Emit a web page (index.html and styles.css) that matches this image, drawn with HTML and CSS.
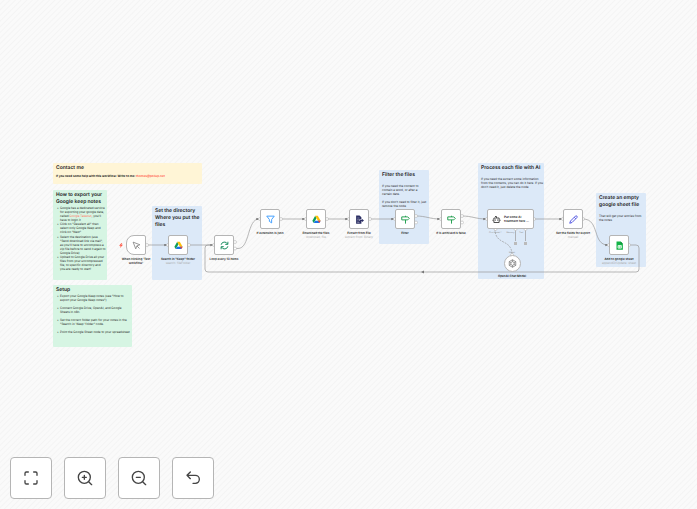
FILE: index.html
```html
<!DOCTYPE html>
<html lang="en">
<head>
    <meta charset="UTF-8">
    <meta name="viewport" content="width=device-width, initial-scale=1.0">
    <title>Google Keep notes workflow</title>
    <link rel="stylesheet" href="styles.css">
</head>
<body>
    <main class="canvas">
        <section class="note yellow note-contact">
            <h2>Contact me</h2>
            <p><strong>If you need some help with this workflow: Write to me: <a href="#">thomas@pollup.net</a></strong></p>
        </section>
        <section class="note green note-export">
            <h2>How to export your<br>Google keep notes</h2>
            <ul>
                <li>Google has a dedicated service<br>for exporting your google data,<br>called <a href="#">Google Takeout</a>, you'll<br>have to login it</li>
                <li>Click on "Deselect all" then<br>select only Google Keep and<br>click on "Next"</li>
                <li class="spaced">Select the destination (use<br>"Send download link via mail",<br>as you'll have to uncompress a<br>zip file before to send it again to<br>Google Drive)</li>
                <li>Upload to Google Drive all your<br>files from your uncompressed<br>file, to specific directory and<br>you are ready to start!</li>
            </ul>
        </section>
        <section class="note blue note-directory">
            <h2>Set the directory<br>Where you put the<br>files</h2>
        </section>
        <section class="note green note-setup">
            <h2>Setup</h2>
            <ul class="steps">
                <li>Export your Google Keep notes (see "How to<br>export your Google Keep notes")</li>
                <li>Connect Google Drive, OpenAI, and Google<br>Sheets in n8n.</li>
                <li>Set the correct folder path for your notes in the<br>"Search in 'Keep' folder" node.</li>
                <li>Point the Google Sheet node to your spreadsheet</li>
            </ul>
        </section>
        <section class="note blue note-filter">
            <h2>Filter the files</h2>
            <p>If you need the content to<br>contain a word, or after a<br>certain date.</p>
            <p>If you don't need to filter it, just<br>remove the node</p>
        </section>
        <section class="note blue note-process">
            <h2>Process each file with AI</h2>
            <p>If you need the extract some information<br>from the contents, you can do it here. If you<br>don't need it, just delete the node</p>
        </section>
        <section class="note blue note-create">
            <h2>Create an empty<br>google sheet file</h2>
            <p>That will get your entries from<br>the notes</p>
        </section>

        <svg class="edges" width="697" height="509" viewBox="0 0 697 509" aria-hidden="true">
            <defs>
                <marker id="arrow" viewBox="0 0 4 4" refX="4" refY="2" markerWidth="3" markerHeight="3" markerUnits="userSpaceOnUse" orient="auto">
                    <path d="M0.5 0.3L3.8 2L0.5 3.7z" fill="#666"/>
                </marker>
            </defs>
            <g class="line arrows">
                <path d="M146 245H167"/>
                <path d="M188 245H213"/>
                <path d="M235 248.500H238C250 248.500 247 219 259 219"/>
                <path d="M280 219H305"/>
                <path d="M327 219H348"/>
                <path d="M370 219H394"/>
                <path d="M416 216C426 216 430 219 440 219"/>
                <path d="M462 216C472 216 476 219 486 219"/>
                <path d="M534 219H562"/>
                <path d="M583 219C600 219 592 245 608 245"/>
            </g>
            <g class="line">
                <path d="M629 245H636Q639 245 639 248V269Q639 272 636 272H208Q205 272 205 269V248Q205 245 208 245H214"/>
                <path class="dashed" d="M495 229C495 246 512 238 512 255"/>
                <path d="M515.500 230V241M525.500 230V241"/>
            </g>
            <path d="M421 272L424 270.500V273.500z" fill="#777"/>
            <path d="M514 242h3v3h-3zM524 242h3v3h-3z" fill="#bbb"/>
            <path d="M121.500 243l-2.500 2.700h1.700l-.7 2.300 3-3.200h-1.800l1-1.800z" fill="#ff5a48"/>
            <g class="ports">
                <circle cx="147" cy="245" r="1.500"/><circle cx="168" cy="245" r="1.500"/><circle cx="189" cy="245" r="1.500"/>
                <circle cx="214" cy="245" r="1.500"/><circle cx="235" cy="242" r="1.500"/><circle cx="235" cy="248.500" r="1.500"/>
                <circle cx="260" cy="219" r="1.500"/><circle cx="281" cy="219" r="1.500"/><circle cx="306" cy="219" r="1.500"/>
                <circle cx="327" cy="219" r="1.500"/><circle cx="349" cy="219" r="1.500"/><circle cx="370" cy="219" r="1.500"/>
                <circle cx="395" cy="219" r="1.500"/><circle cx="416" cy="216" r="1.500"/><circle cx="416" cy="222.500" r="1.500"/>
                <circle cx="441" cy="219" r="1.500"/><circle cx="462" cy="216" r="1.500"/><circle cx="462" cy="222.500" r="1.500"/>
                <circle cx="487" cy="219" r="1.500"/><circle cx="534" cy="219" r="1.500"/><circle cx="563" cy="219" r="1.500"/>
                <circle cx="583" cy="219" r="1.500"/><circle cx="609" cy="245" r="1.500"/><circle cx="629" cy="245" r="1.500"/>
                <circle cx="495.500" cy="229" r="1.500"/><circle cx="515.500" cy="229" r="1.500"/><circle cx="525.500" cy="229" r="1.500"/>
                <circle cx="512" cy="255" r="1.500"/>
            </g>
        </svg>

        <div class="node node-trigger">
            <div class="box trigger">
                <svg viewBox="0 0 24 24" fill="none" stroke="#777" stroke-width="2" stroke-linejoin="round"><path d="M3 3l7 18 3-8 8-3zM13 13l7 7"/></svg>
            </div>
            <span>When clicking 'Test<br>workflow'</span>
        </div>
        <div class="node node-search">
            <div class="box">
                <svg viewBox="0 0 24 24"><path fill="#0f9d58" d="M8.500 2L1 15.500l3.700 6L12 8.500z"/><path fill="#ffc107" d="M8.500 2h7L23 15.500h-7.500z"/><path fill="#1a73e8" d="M8.500 15.500H23l-3.700 6H4.700z"/><path fill="#ea4335" d="M15.500 15.500H23l-3.700 6z"/></svg>
            </div>
            <span>Search in "Keep" folder</span>
            <small>search: fileFolder</small>
        </div>
        <div class="node node-loop">
            <div class="box">
                <svg viewBox="0 0 24 24" fill="none" stroke="#138a5b" stroke-width="2.500"><path d="M3 10a9 9 0 0 1 17-2M21 2v7h-7M21 14a9 9 0 0 1-17 2M3 22v-7h7"/></svg>
            </div>
            <span>Loop every 10 items</span>
        </div>
        <div class="node node-extension">
            <div class="box">
                <svg viewBox="0 0 24 24" fill="none" stroke="#3b9cff" stroke-width="2.500" stroke-linejoin="round"><path d="M2 3h20l-7 9v9l-6-4v-5z"/></svg>
            </div>
            <span>If extension is json</span>
        </div>
        <div class="node node-download">
            <div class="box">
                <svg viewBox="0 0 24 24"><path fill="#0f9d58" d="M8.500 2L1 15.500l3.700 6L12 8.500z"/><path fill="#ffc107" d="M8.500 2h7L23 15.500h-7.500z"/><path fill="#1a73e8" d="M8.500 15.500H23l-3.700 6H4.700z"/><path fill="#ea4335" d="M15.500 15.500H23l-3.700 6z"/></svg>
            </div>
            <span>Download the files</span>
            <small>download: file</small>
        </div>
        <div class="node node-extract">
            <div class="box">
                <svg viewBox="0 0 24 24"><path fill="#2c2f64" d="M3 1h9l5 5v6h-6v4h6v7H3z"/><path fill="#2c2f64" d="M12 13h6v-3l6 4.500-6 4.500v-3h-6z"/><path stroke="#fff" stroke-width="1" d="M6 8h6M6 12h4M6 16h4M6 20h6"/></svg>
            </div>
            <span>Extract from File</span>
            <small>extract from: Binary</small>
        </div>
        <div class="node node-filter">
            <div class="box">
                <svg viewBox="0 0 24 24" fill="none" stroke="#1d9c4b" stroke-width="2.500" stroke-linejoin="round"><path d="M2 5h16l4 4-4 4H2zM12 13v10M12 2v3"/></svg>
            </div>
            <span>Filter</span>
        </div>
        <div class="node node-archived">
            <div class="box">
                <svg viewBox="0 0 24 24" fill="none" stroke="#1d9c4b" stroke-width="2.500" stroke-linejoin="round"><path d="M2 5h16l4 4-4 4H2zM12 13v10M12 2v3"/></svg>
            </div>
            <span>If is archived is false</span>
        </div>
        <div class="node node-ai">
            <div class="box wide">
                <svg viewBox="0 0 24 24" fill="none" stroke="#444" stroke-width="2.500" stroke-linejoin="round"><path d="M5 8h14v12H5zM12 8V4H8M1 14h3M20 14h3M9 12v3M15 12v3"/></svg>
                <span>Put some AI<br>treatment here ...</span>
            </div>
            <div class="inputs"><small>Chat Model *</small><small>Memory</small><small>Tool</small></div>
        </div>
        <div class="node node-openai">
            <small>Model</small>
            <div class="box round">
                <svg viewBox="0 0 24 24" fill="none" stroke="#777" stroke-width="2"><path d="M12 2l8.700 5v10L12 22l-8.700-5V7zM12 7l4.500 2.500v5L12 17l-4.500-2.500v-5zM12 2v5M20.700 7l-4.200 2.500M20.700 17l-4.200-2.500M12 22v-5M3.300 17l4.200-2.500M3.300 7l4.200 2.500"/></svg>
            </div>
            <span>OpenAI Chat Model</span>
        </div>
        <div class="node node-fields">
            <div class="box">
                <svg viewBox="0 0 24 24" fill="none" stroke="#4b4fe0" stroke-width="2.500" stroke-linejoin="round"><path d="M2 22l2-6L17 3q2-2 4 0t0 4L8 20zM14 6l4 4"/></svg>
            </div>
            <span>Set the fields for export</span>
            <small>manual</small>
        </div>
        <div class="node node-sheet">
            <div class="box">
                <svg viewBox="0 0 24 24"><path fill="#12b347" d="M4 1h11l6 6v16H4z"/><path fill="#0c8a35" d="M15 1l6 6h-6z"/><path fill="none" stroke="#fff" stroke-width="2" d="M8 12h9v7H8zM8 15.500h9M12.500 12v7"/></svg>
            </div>
            <span>Add to google sheet</span>
            <small>appendOrUpdate: sheet</small>
        </div>

        <nav class="controls">
            <button type="button" aria-label="Fit to view">
                <svg viewBox="0 0 24 24"><path d="M3 8V5a2 2 0 0 1 2-2h3M16 3h3a2 2 0 0 1 2 2v3M21 16v3a2 2 0 0 1-2 2h-3M8 21H5a2 2 0 0 1-2-2v-3"/></svg>
            </button>
            <button type="button" aria-label="Zoom in">
                <svg viewBox="0 0 24 24"><circle cx="11" cy="11" r="9"/><path d="M22 22l-4.500-4.500M11 8v6M8 11h6"/></svg>
            </button>
            <button type="button" aria-label="Zoom out">
                <svg viewBox="0 0 24 24"><circle cx="11" cy="11" r="9"/><path d="M22 22l-4.500-4.500M8 11h6"/></svg>
            </button>
            <button type="button" aria-label="Reset zoom">
                <svg viewBox="0 0 24 24"><path d="M8 13L3 8l5-5M3 8h12.500a5.500 5.500 0 0 1 0 12H12"/></svg>
            </button>
        </nav>
    </main>
</body>
</html>
```

FILE: styles.css
```css
* {
    box-sizing: border-box;
}
body {
    margin: 0;
    font-family: Inter, "Liberation Sans", sans-serif;
    font-size: 3px;
    line-height: 4px;
    color: #222;
    text-rendering: geometricPrecision;
}
.canvas {
    position: relative;
    min-height: 100vh;
    overflow: hidden;
    background: repeating-linear-gradient(135deg, #fafafa 0, #fafafa 2px, #f4f4f4 3px, #fafafa 4px);
}
h2, p, ul {
    margin: 0;
}
h2 {
    font-size: 5px;
    line-height: 7px;
    font-weight: 600;
    margin-bottom: 2px;
}
a {
    color: #ff6d5a;
    text-decoration: none;
}

/* sticky notes */
.note {
    position: absolute;
    padding: 2px 3px;
    border-radius: 1px;
    white-space: nowrap;
}
.note p + p {
    margin-top: 4px;
}
.note ul {
    padding-left: 4px;
    list-style: none;
}
.note li {
    position: relative;
}
.note li::before {
    content: "•";
    position: absolute;
    left: -3px;
}
.note li.spaced {
    margin-top: 1px;
}
.note .steps li {
    margin-bottom: 4px;
}
.yellow {
    background: #fff5d6;
}
.green {
    background: #d6f5e3;
}
.blue {
    background: #dce9f8;
}
.note-contact { left: 53px; top: 163px; width: 149px; height: 21px; }
.note-export { left: 53px; top: 190px; width: 54px; height: 90px; }
.note-directory { left: 152px; top: 206px; width: 50px; height: 74px; }
.note-setup { left: 53px; top: 285px; width: 79px; height: 62px; }
.note-filter { left: 379px; top: 170px; width: 50px; height: 74px; }
.note-process { left: 478px; top: 163px; width: 66px; height: 116px; }
.note-create { left: 596px; top: 193px; width: 50px; height: 74px; }
.note-export h2, .note-setup h2 {
    margin-bottom: 0;
}
.note-filter h2, .note-process h2, .note-create h2 {
    margin-bottom: 5px;
}

/* connections */
.edges {
    position: absolute;
    left: 0;
    top: 0;
}
.line {
    fill: none;
    stroke: #999;
    stroke-width: 0.7;
}
.arrows path {
    marker-end: url(#arrow);
}
.dashed {
    stroke-dasharray: 2 1;
}
.ports {
    fill: #fff;
    stroke: #aaa;
    stroke-width: 0.5;
}

/* nodes */
.node {
    position: absolute;
    width: 20px;
    display: flex;
    flex-direction: column;
    align-items: center;
    text-align: center;
    white-space: nowrap;
    font-weight: 600;
}
.box {
    width: 20px;
    height: 20px;
    margin-bottom: 2px;
    display: flex;
    align-items: center;
    justify-content: center;
    background: #fff;
    border: 1px solid #b5b5b5;
    border-radius: 2px;
}
.box svg {
    width: 9px;
    height: 9px;
}
.trigger {
    border-radius: 8px 2px 2px 8px;
}
.wide {
    width: 47px;
    gap: 3px;
    text-align: left;
}
.round {
    width: 17px;
    height: 17px;
    border-radius: 50%;
}
small {
    font-size: 2px;
    font-weight: 400;
    color: #888;
}
.node > span + small {
    font-size: 3px;
    color: #aaa;
}
.inputs {
    display: flex;
    width: 47px;
    gap: 5px;
    padding-left: 2px;
}
.node-trigger { left: 126px; top: 235px; }
.node-search { left: 168px; top: 235px; }
.node-loop { left: 214px; top: 235px; }
.node-extension { left: 260px; top: 209px; }
.node-download { left: 306px; top: 209px; }
.node-extract { left: 349px; top: 209px; }
.node-filter { left: 395px; top: 209px; }
.node-archived { left: 441px; top: 209px; }
.node-ai { left: 487px; top: 209px; width: 47px; }
.node-openai { left: 502px; top: 251px; }
.node-fields { left: 563px; top: 209px; }
.node-sheet { left: 609px; top: 235px; }

/* canvas buttons */
.controls {
    position: absolute;
    left: 10px;
    bottom: 10px;
    display: flex;
    gap: 12px;
}
.controls button {
    width: 42px;
    height: 42px;
    padding: 0;
    display: flex;
    align-items: center;
    justify-content: center;
    background: #fff;
    border: 1px solid #b5b5b5;
    border-radius: 4px;
    cursor: pointer;
}
.controls button:hover {
    border-color: #ff6d5a;
}
.controls svg {
    width: 16px;
    height: 16px;
    fill: none;
    stroke: #444;
    stroke-width: 2;
    stroke-linecap: round;
    stroke-linejoin: round;
}
```
